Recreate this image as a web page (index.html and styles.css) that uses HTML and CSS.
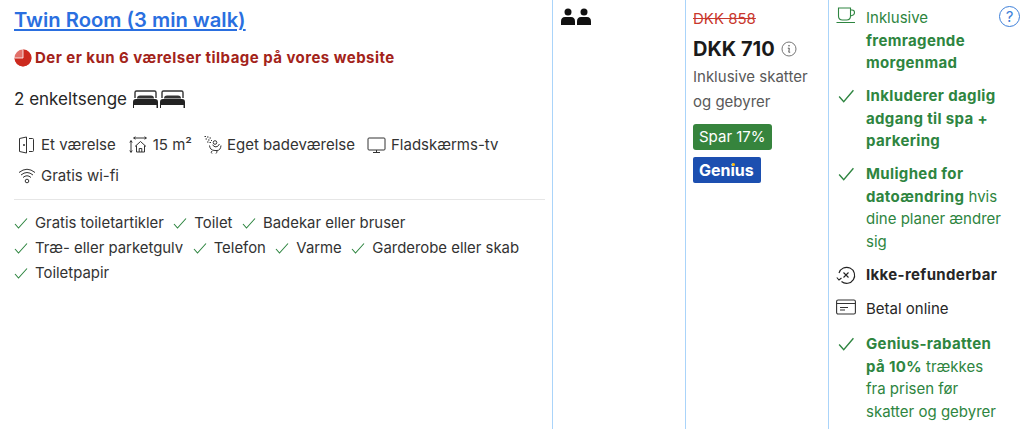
FILE: index.html
```html
<!DOCTYPE html>
<html lang="da">
<head>
    <meta charset="UTF-8">
    <title>Twin Room</title>
    <link rel="stylesheet" href="styles.css">
</head>
<body>
    <div class="row">
        <div class="col room">
            <a class="room_name" href="#">Twin Room (3 min walk)</a>
            <div class="scarcity">
                <svg class="pie" width="18" height="18" viewBox="0 0 18 18"><circle cx="9" cy="9" r="8.500" fill="#e2716a"/><path d="M9 9V.5A8.500 8.500 0 1 1 .5 9Z" fill="#cc2a1e"/><path d="M9 .5V9H.5" fill="none" stroke="#fff" stroke-width=".8"/></svg>
                <span>Der er kun 6 værelser tilbage på vores website</span>
            </div>
            <div class="beds">
                <span>2 enkeltsenge</span>
                <svg width="27" height="20" viewBox="0 0 27 20"><path d="M3 9V3.500Q3 2 4.500 2h18Q24 2 24 3.500V9" fill="none" stroke="#333" stroke-width="1.400"/><path d="M5 9.500Q5 6.500 8 6.500h11q3 0 3 3z" fill="#333"/><path d="M1 13q0-3 3-3h19q3 0 3 3v6h-1.500v-3h-22.500v3h-1z" fill="#222"/></svg><svg width="27" height="20" viewBox="0 0 27 20"><path d="M3 9V3.500Q3 2 4.500 2h18Q24 2 24 3.500V9" fill="none" stroke="#333" stroke-width="1.400"/><path d="M5 9.500Q5 6.500 8 6.500h11q3 0 3 3z" fill="#333"/><path d="M1 13q0-3 3-3h19q3 0 3 3v6h-1.500v-3h-22.500v3h-1z" fill="#222"/></svg>
            </div>
            <div class="facilities">
                <span class="facility">
                    <svg width="18" height="18" viewBox="0 0 18 18" fill="none" stroke="#333" stroke-width="1"><path d="M1.500 2.500 8.500 1v16l-7-1.500zM11 2.500h3.500a1 1 0 0 1 1 1v11a1 1 0 0 1-1 1H11"/><circle cx="6" cy="9" r=".6" fill="#333"/></svg>
                    Et værelse
                </span>
                <span class="facility">
                    <svg width="20" height="18" viewBox="0 0 20 18" fill="none" stroke="#333" stroke-width="1"><path d="M6 2h12M7.500.8 5.500 2l2 1.200M16.500.8l2 1.200-2 1.200M3 5v11M1.800 6.500 3 4.500l1.200 2M1.800 14.500 3 16.500l1.200-2M7 10.500l5.500-5 5.500 5M8.500 9.500V16h8V9.500M11.200 16v-3.500h2.600V16"/></svg>
                    15 m²
                </span>
                <span class="facility">
                    <svg width="18" height="18" viewBox="0 0 18 18" fill="none" stroke="#333" stroke-width="1"><path d="M.5.5h1.500M3 1h1.500M5.500 2H7M1.500 3H3M4 4h1.500M7 4.500h1M3 6h1.500M5.500 6.500H7" stroke-width="1.200"/><circle cx="11" cy="6.500" r="1.800"/><path d="M5.500 9.500q.5 5 5.500 5h2q3.500 0 4-5M8.500 9q2.500 3 5 1.500l2-2.500M8 15q-1.500 1.500 0 2.500M13 15q0 1.500-1 2.500"/></svg>
                    Eget badeværelse
                </span>
                <span class="facility">
                    <svg width="19" height="18" viewBox="0 0 19 18" fill="none" stroke="#333" stroke-width="1"><rect x="1" y="2" width="17" height="12" rx="1"/><path d="M9.500 14v2.500M6 16.500h7"/></svg>
                    Fladskærms-tv
                </span>
                <span class="facility">
                    <svg width="18" height="18" viewBox="0 0 18 18" fill="none" stroke="#333" stroke-width="1"><path d="M1 5.500q8-6.500 16 0M3 8q6-5 12 0M5 10.500q4-3.500 8 0"/><circle cx="9" cy="14" r="1.800"/></svg>
                    Gratis wi-fi
                </span>
            </div>
            <div class="amenities">
                <span class="amenity"><svg class="check_sm" viewBox="0 0 14 14"><path d="M1 8l3.500 4L13 2.500"/></svg>Gratis toiletartikler</span>
                <span class="amenity"><svg class="check_sm" viewBox="0 0 14 14"><path d="M1 8l3.500 4L13 2.500"/></svg>Toilet</span>
                <span class="amenity"><svg class="check_sm" viewBox="0 0 14 14"><path d="M1 8l3.500 4L13 2.500"/></svg>Badekar eller bruser</span>
                <span class="amenity"><svg class="check_sm" viewBox="0 0 14 14"><path d="M1 8l3.500 4L13 2.500"/></svg>Træ- eller parketgulv</span>
                <span class="amenity"><svg class="check_sm" viewBox="0 0 14 14"><path d="M1 8l3.500 4L13 2.500"/></svg>Telefon</span>
                <span class="amenity"><svg class="check_sm" viewBox="0 0 14 14"><path d="M1 8l3.500 4L13 2.500"/></svg>Varme</span>
                <span class="amenity"><svg class="check_sm" viewBox="0 0 14 14"><path d="M1 8l3.500 4L13 2.500"/></svg>Garderobe eller skab</span>
                <span class="amenity"><svg class="check_sm" viewBox="0 0 14 14"><path d="M1 8l3.500 4L13 2.500"/></svg>Toiletpapir</span>
            </div>
        </div>

        <div class="col guests">
            <svg width="32" height="18" viewBox="0 0 32 18" fill="#111"><circle cx="8" cy="4" r="3.500"/><path d="M1 17v-3.500Q1 9 5 9h6q4 0 4 4.500V17z"/><circle cx="24" cy="4" r="3.500"/><path d="M17 17v-3.500Q17 9 21 9h6q4 0 4 4.500V17z"/></svg>
        </div>

        <div class="col price">
            <div class="old_price">DKK 858</div>
            <div class="new_price">
                <span>DKK 710</span>
                <svg width="16" height="16" viewBox="0 0 16 16" fill="none" stroke="#777" stroke-width="1"><circle cx="8" cy="8" r="7"/><circle cx="8" cy="4.800" r=".8" fill="#555" stroke="none"/><path d="M6.800 7.200H8.300L7.800 11.200H9.200" stroke="#555"/></svg>
            </div>
            <div class="taxes">Inklusive skatter og gebyrer</div>
            <div class="badges">
                <span class="save">Spar 17%</span>
                <span class="genius">Genius<span class="genius_dot"></span></span>
            </div>
        </div>

        <div class="col terms">
            <div class="help">?</div>
            <div class="term green">
                <svg class="term_icon cup" width="20" height="18" viewBox="0 0 20 18" fill="none" stroke="#2e8540" stroke-width="1.100"><path d="M2.500 1h12v8q0 4-4 4h-4q-4 0-4-4zM14.500 3h1.500q2.500 0 2.500 2.500T16 8.500L14.300 9M.5 15.500h18.500"/></svg>
                <div>Inklusive <b>fremragende morgenmad</b></div>
            </div>
            <div class="term green">
                <svg class="term_icon check" viewBox="0 0 14 14"><path d="M1 7.500l4 4.500L13.500 2"/></svg>
                <div><b>Inkluderer daglig adgang til spa + parkering</b></div>
            </div>
            <div class="term green">
                <svg class="term_icon check" viewBox="0 0 14 14"><path d="M1 7.500l4 4.500L13.500 2"/></svg>
                <div><b>Mulighed for datoændring</b> hvis dine planer ændrer sig</div>
            </div>
            <div class="term term_plain">
                <svg class="term_icon" width="20" height="20" viewBox="0 0 20 20" fill="none" stroke="#222" stroke-width="1.100"><path d="M3 8a8 8 0 1 1 2.500 8.500M.8 12.500 3 15l2.500-2"/><path d="M7.500 7.500l5 5M12.500 7.500l-5 5"/></svg>
                <div><b class="dark">Ikke-refunderbar</b></div>
            </div>
            <div class="term term_plain">
                <svg class="term_icon" width="20" height="16" viewBox="0 0 20 16" fill="none" stroke="#333" stroke-width="1.100"><rect x=".6" y="1" width="18.800" height="14" rx="1.500"/><path d="M.6 4.500h18.800M4 8.500h8M4 11h5"/></svg>
                <div class="dark">Betal online</div>
            </div>
            <div class="term term_genius green">
                <svg class="term_icon check" viewBox="0 0 14 14"><path d="M1 7.500l4 4.500L13.500 2"/></svg>
                <div><b>Genius-rabatten på 10%</b> trækkes fra prisen før skatter og gebyrer</div>
            </div>
        </div>
    </div>
</body>
</html>
```

FILE: styles.css
```css
html, body {
    height: 100%;
    overflow: hidden;
}
body {
    margin: 0;
    background: #fff;
    color: #262626;
    font-family: Inter, "Liberation Sans", sans-serif;
    font-size: 15px;
}
svg {
    flex: none;
}
b {
    font-weight: 700;
    letter-spacing: .35px;
}

.row {
    display: grid;
    grid-template-columns: 553px 133px 143px 1fr;
    height: 429px;
}
.col {
    border-right: 1px solid #aad4fa;
}

/* room */
.room {
    padding: 7px 7px 0 14px;
}
.room_name {
    display: block;
    color: #2a6fe0;
    font-size: 20.200px;
    font-weight: 600;
    line-height: 26px;
}
.scarcity {
    display: flex;
    align-items: center;
    gap: 3px;
    margin-top: 15px;
    color: #a3231a;
    font-weight: 700;
    font-size: 15px;
    letter-spacing: .46px;
    line-height: 20px;
}
.beds {
    display: flex;
    align-items: center;
    margin-top: 19px;
    font-size: 17px;
    line-height: 24px;
}
.beds span {
    margin-right: 5px;
}
.facilities {
    display: flex;
    flex-wrap: wrap;
    gap: 11px 12px;
    margin-top: 24px;
    padding: 0 0 13px 4px;
    border-bottom: 1px solid #e6e6e6;
    color: #333;
    line-height: 20px;
}
.facility {
    display: flex;
    align-items: center;
    gap: 5px;
}
.amenities {
    display: flex;
    flex-wrap: wrap;
    gap: 5px 9.500px;
    width: 510px;
    margin-top: 13px;
    color: #333;
    font-size: 14.900px;
    line-height: 20px;
}
.amenity {
    display: flex;
    align-items: center;
    gap: 7px;
}
.check_sm {
    width: 14px;
    height: 14px;
    fill: none;
    stroke: #2e8540;
    stroke-width: 1.100;
}

/* guests */
.guests {
    padding: 8px 7px;
}

/* price */
.price {
    padding: 10px 8px 0 7px;
}
.old_price {
    color: #c8372d;
    text-decoration: line-through;
    line-height: 18px;
}
.new_price {
    display: flex;
    align-items: center;
    gap: 6px;
    margin-top: 8px;
    color: #1a1a1a;
    font-size: 20px;
    font-weight: 700;
    line-height: 26px;
}
.taxes {
    margin-top: 2px;
    color: #595959;
    line-height: 25px;
}
.badges {
    display: flex;
    flex-direction: column;
    align-items: flex-start;
    gap: 7px;
    margin-top: 10px;
}
.save {
    padding: 0 6px;
    border-radius: 3px;
    background: #36843d;
    color: #fff;
    line-height: 26px;
}
.genius {
    position: relative;
    padding: 0 7px 0 6px;
    border-radius: 2px;
    background: #1c4fb0;
    color: #fff;
    font-size: 16px;
    font-weight: 700;
    line-height: 26px;
}
.genius_dot {
    position: absolute;
    top: 6px;
    left: 39px;
    width: 3px;
    height: 3px;
    border-radius: 50%;
    background: #febb02;
}

/* conditions */
.terms {
    position: relative;
    padding: 7px 0 0 7px;
    border-right: 0;
}
.help {
    position: absolute;
    top: 6px;
    right: 4px;
    width: 19px;
    height: 19px;
    border: 1px solid #3d7fd9;
    border-radius: 50%;
    color: #3d7fd9;
    font-size: 15px;
    line-height: 19px;
    text-align: center;
}
.term {
    display: flex;
    gap: 10px;
    width: 168px;
    margin-bottom: 10.200px;
    line-height: 22.600px;
}
.term_plain {
    margin-top: 11px;
    margin-bottom: 11px;
}
.term_genius {
    margin-top: 12.500px;
}
.term > div {
    flex: 1;
}
.term_icon {
    width: 20px;
    margin-top: 1px;
}
.cup {
    margin-top: 0;
}
.check {
    height: 20px;
    fill: none;
    stroke: #2e8540;
    stroke-width: 1.200;
    padding: 2px;
    box-sizing: border-box;
}
.green {
    color: #2e8540;
}
.dark {
    color: #262626;
}
```
